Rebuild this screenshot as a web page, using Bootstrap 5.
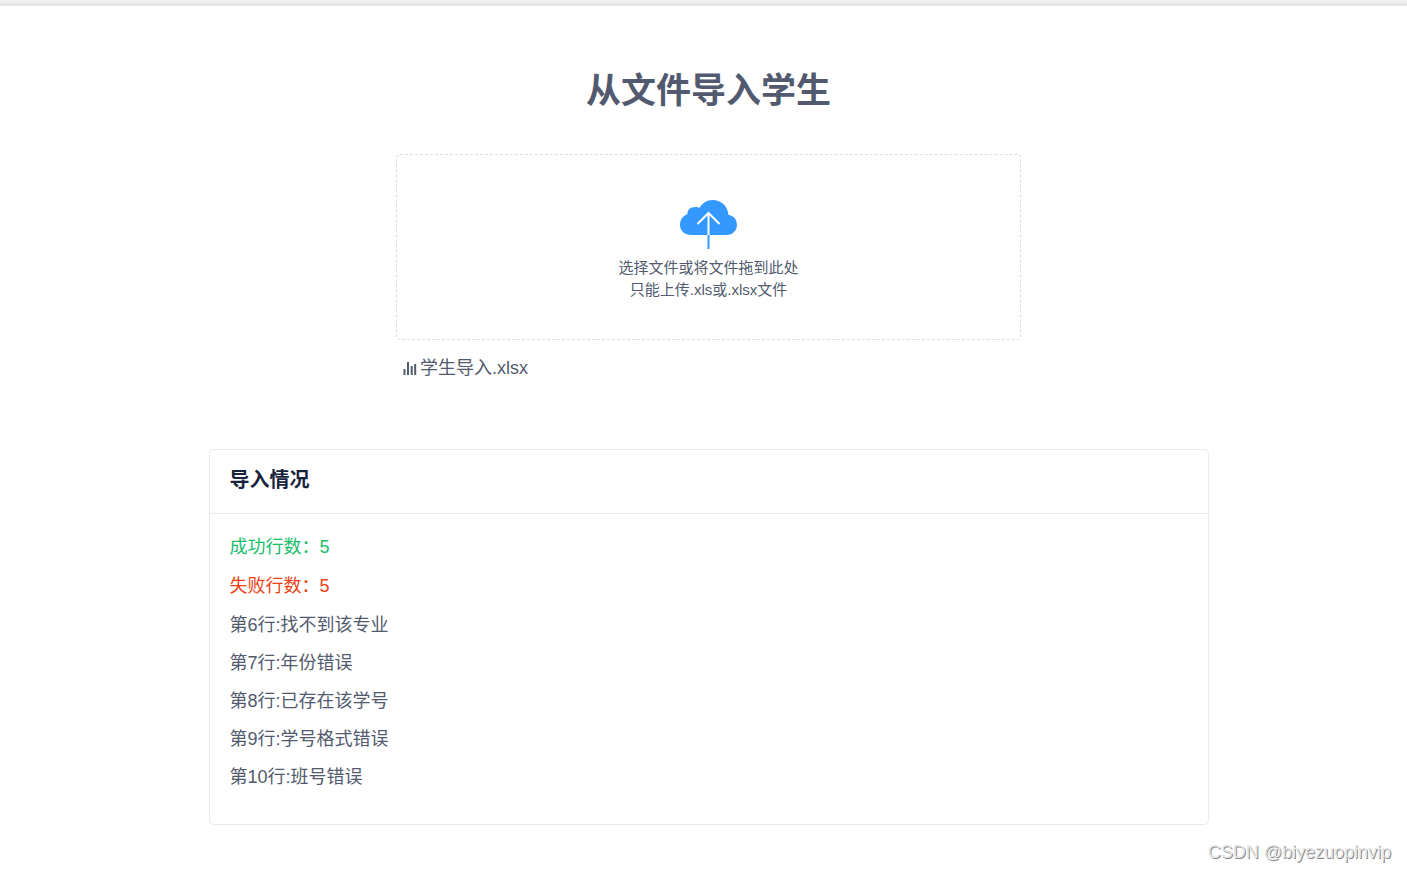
<!DOCTYPE html>
<html lang="zh-CN">
<head>
<meta charset="utf-8">
<meta name="viewport" content="width=device-width, initial-scale=1">
<title>从文件导入学生</title>
<link href="https://cdn.jsdelivr.net/npm/bootstrap@5.3.0/dist/css/bootstrap.min.css" rel="stylesheet">
<style>
body { font-family: "Liberation Sans", "Noto Sans CJK SC", sans-serif; font-size: 18px; line-height: 26px; color: #515a6e; }
.top-strip { height: 6px; background: linear-gradient(#f2f3f5, #e6e7e9 66%, #dddfe1 67%, #e9eaeb); }
.import-page { max-width: 1000px; padding-top: 61px; }
.page-shell { padding-left: 10px; }
.page-title { font-size: 35px; line-height: 48px; margin-bottom: 39px; font-weight: 700; }
.upload-area { width: 62.5%; }
.drop-zone { border: 1px dashed #dcdee2; border-radius: 4px; padding: 45px 0 38px; font-size: 15px; line-height: 22px; cursor: pointer; }
.drop-zone svg { width: 58px; height: 50px; margin-bottom: 7px; }
.file-link { color: inherit; padding: 0 7px; margin-top: 15px; gap: 3px; }
.result-card { border-color: #e8eaec; border-radius: 5px; margin-top: 66px; color: inherit; }
.result-card .card-header { background: none; border-color: #e8eaec; padding: 17px 20px 19px; }
.result-title { font-size: 20px; line-height: 27px; color: #17233d; font-weight: 700; }
.result-card .card-body { padding: 20px 20px 34px; }
.result-card .card-body p { margin-bottom: 13px; }
.result-card li + li { margin-top: 12px; }
.ok-text { color: #19be6b; }
.fail-text { color: #ed4014; }
.watermark { color: #e6e6e6; padding: 14px 16px 0; text-shadow: 1px 1px 0 #8a8a8a; }
</style>
</head>
<body>
<div class="top-strip"></div>
<div class="page-shell">
  <main class="import-page mx-auto">
    <h1 class="page-title text-center">从文件导入学生</h1>
    <section class="upload-area mx-auto">
      <input type="file" id="studentFile" class="visually-hidden" accept=".xls,.xlsx">
      <label for="studentFile" class="drop-zone d-flex flex-column align-items-center text-center">
        <svg viewBox="0 0 58 50" aria-hidden="true">
          <path fill="#3399ff" d="M11 35C5 35 0 31 0 25C0 19.500 3 15.500 7.500 14.200C7 9.500 11 6.700 15.500 6.900C17.300 6.900 18.200 7.200 19.700 7.800C22.500 3 27 0 32.500 0C41.500 0 48 6.500 48.300 14.700C53.500 15.500 57 19.500 57 24.800C57 30.500 52.500 35 47 35Z"/>
          <path fill="none" stroke="#fff" stroke-width="2" d="M17.500 24L28.500 13L39.500 24M28.500 14V35"/>
          <path fill="none" stroke="#3399ff" stroke-width="2" d="M28.500 35V49"/>
        </svg>
        <span>选择文件或将文件拖到此处</span>
        <span>只能上传.xls或.xlsx文件</span>
      </label>
      <a href="#" class="file-link d-inline-flex align-items-center text-decoration-none">
        <svg width="14" height="16" viewBox="0 0 14 16" fill="currentColor" aria-hidden="true"><path d="M.500 9h2v6h-2zM4 2h2v13H4zM7.700 6h2v9h-2zM11.200 4h2v11h-2z"/></svg>
        <span>学生导入.xlsx</span>
      </a>
    </section>
    <section class="card result-card">
      <div class="card-header"><h2 class="result-title mb-0">导入情况</h2></div>
      <div class="card-body">
        <p class="ok-text">成功行数：5</p>
        <p class="fail-text">失败行数：5</p>
        <ul class="list-unstyled mb-0">
          <li>第6行:找不到该专业</li>
          <li>第7行:年份错误</li>
          <li>第8行:已存在该学号</li>
          <li>第9行:学号格式错误</li>
          <li>第10行:班号错误</li>
        </ul>
      </div>
    </section>
  </main>
</div>
<footer class="watermark text-end">CSDN @biyezuopinvip</footer>
<script src="https://cdn.jsdelivr.net/npm/bootstrap@5.3.0/dist/js/bootstrap.bundle.min.js"></script>
</body>
</html>
